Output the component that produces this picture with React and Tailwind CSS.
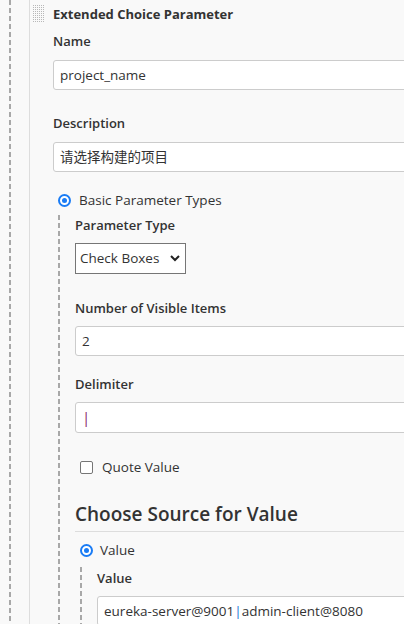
import React from "react";

const font = { fontFamily: '"Open Sans", "Noto Sans CJK SC", sans-serif' };

function Grip() {
  const dots = [];
  for (let r = 0; r < 9; r++) {
    for (let c = 0; c < 6; c++) {
      dots.push(<rect key={r + "-" + c} x={c * 2} y={r * 2} width="1" height="1" fill="#b8b8b8" />);
    }
  }
  return (
    <svg width="12" height="18" viewBox="0 0 12 18" className="shrink-0">
      {dots}
    </svg>
  );
}

function Radio() {
  return (
    <div className="w-[13px] h-[13px] rounded-full border-2 border-[#1a7cf5] bg-white flex items-center justify-center shrink-0">
      <div className="w-[5px] h-[5px] rounded-full bg-[#1a7cf5]" />
    </div>
  );
}

function Dashed({ className }) {
  return (
    <div
      className={
        "w-[2px] shrink-0 bg-[repeating-linear-gradient(to_bottom,#a8a8a8_0px,#a8a8a8_5px,transparent_5px,transparent_8px)] " +
        (className || "")
      }
    />
  );
}

function TextInput({ children, className }) {
  return (
    <div
      className={
        "h-[30px] w-[420px] shrink-0 bg-white border border-[#cccccc] rounded-[3px] flex items-center pl-[6px] text-[13.5px] text-[#333] whitespace-nowrap " +
        (className || "")
      }
    >
      {children}
    </div>
  );
}

function Label({ children, className }) {
  return (
    <div className={"shrink-0 text-[13px] font-semibold leading-[20px] " + (className || "")}>{children}</div>
  );
}

export default function App() {
  return (
    <div className="w-[404px] h-[624px] overflow-hidden bg-[#f9f9f9] flex text-[#333]" style={font}>
      <div className="w-[9px] shrink-0" />
      <Dashed className="h-full" />
      <div className="w-[18px] shrink-0" />
      <div className="w-px bg-[#dddddd] h-full shrink-0" />
      <div className="flex-1 flex flex-col min-w-0">
        {/* title */}
        <div className="flex items-start h-[30px] pt-[5px] shrink-0">
          <div className="ml-[3px]">
            <Grip />
          </div>
          <div className="ml-[8px] text-[13px] font-bold leading-[20px] -mt-[1px]">Extended Choice Parameter</div>
        </div>
        <div className="pl-[23px] flex flex-col shrink-0">
          <Label className="mt-[1px]">Name</Label>
          <TextInput className="mt-[9px]">project_name</TextInput>
          <Label className="mt-[23px]">Description</Label>
          <TextInput className="mt-[9px]">请选择构建的项目</TextInput>
        </div>
        <div className="pl-[28px] flex items-center mt-[21px] h-[14px] shrink-0">
          <Radio />
          <span className="ml-[8px] text-[13.5px] leading-[20px]">Basic Parameter Types</span>
        </div>
        <div className="flex flex-1 min-h-0 mt-[8px] pl-[28px]">
          <Dashed className="h-full" />
          <div className="flex flex-col pl-[15px] min-w-0">
            <Label className="mt-[0px]">Parameter Type</Label>
            <div className="shrink-0 mt-[8px] h-[31px] w-[111px] bg-white border border-[#767676] flex items-center justify-between pl-[4px] pr-[5px] text-[13.5px]">
              <span>Check Boxes</span>
              <svg width="10" height="7" viewBox="0 0 10 7">
                <polyline points="1,1 5,5 9,1" fill="none" stroke="#222" strokeWidth="2" />
              </svg>
            </div>
            <Label className="mt-[24px]">Number of Visible Items</Label>
            <TextInput className="mt-[8px]">2</TextInput>
            <Label className="mt-[18px]">Delimiter</Label>
            <TextInput className="mt-[8px] h-[31px]">
              <span className="text-[#8a2868] text-[15px]">|</span>
            </TextInput>
            <div className="shrink-0 flex items-center mt-[27px] pl-[5px] h-[14px]">
              <div className="w-[13px] h-[13px] bg-white border border-[#767676] rounded-[2px] shrink-0" />
              <span className="ml-[9px] text-[13.5px] leading-[20px]">Quote Value</span>
            </div>
            <div className="shrink-0 mt-[26px] text-[19px] font-semibold leading-[28px] pb-[3px] border-b border-[#dddddd] w-[340px]">
              Choose Source for Value
            </div>
            <div className="shrink-0 flex items-center mt-[11px] pl-[5px] h-[14px]">
              <Radio />
              <span className="ml-[7px] text-[13.5px] leading-[20px]">Value</span>
            </div>
            <div className="shrink-0 flex mt-[10px] pl-[5px]">
              <Dashed className="h-[100px]" />
              <div className="flex flex-col pl-[15px]">
                <Label className="mt-[1px]">Value</Label>
                <TextInput className="mt-[8px]">
                  eureka-server@9001<span className="text-[#1a6fd6]">|</span>admin-client@8080
                </TextInput>
              </div>
            </div>
          </div>
        </div>
      </div>
    </div>
  );
}
